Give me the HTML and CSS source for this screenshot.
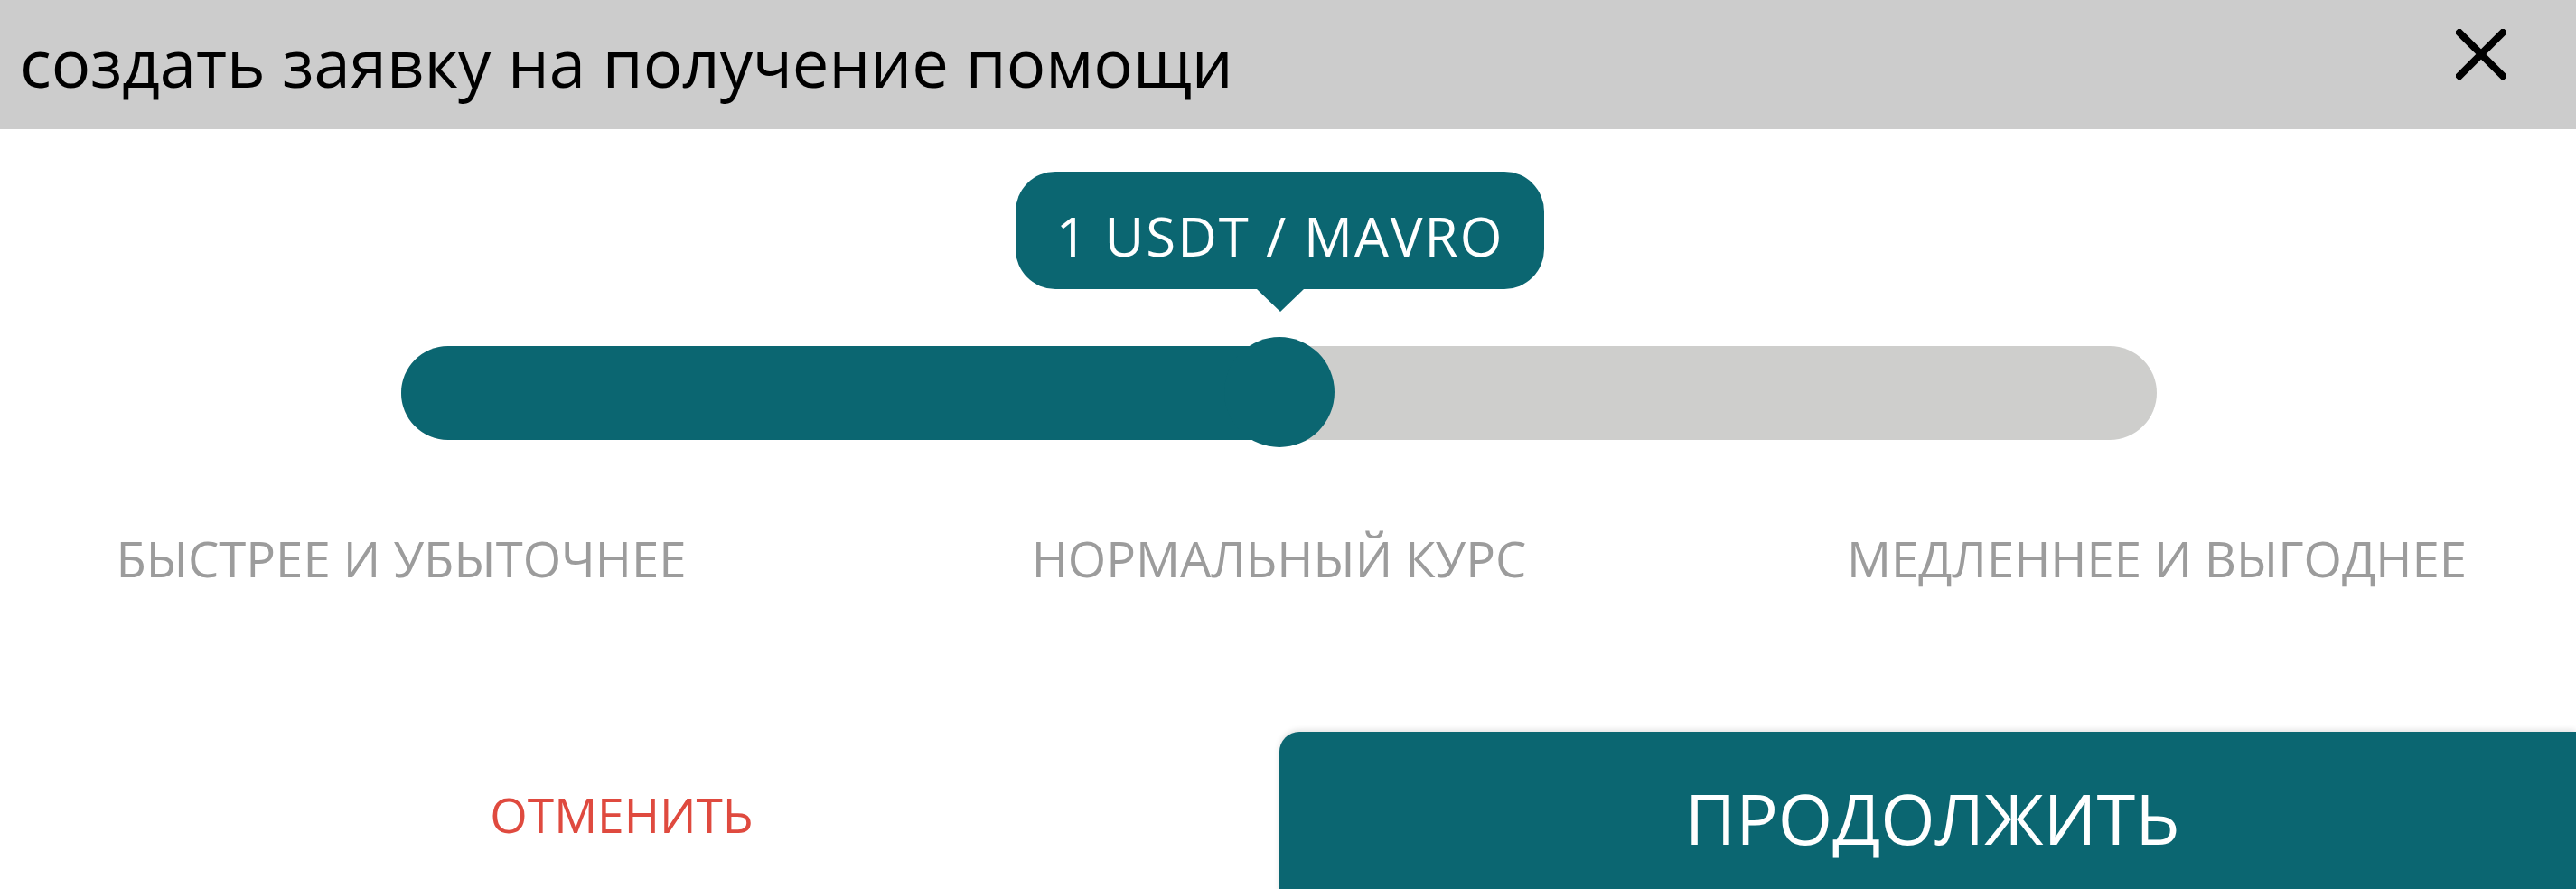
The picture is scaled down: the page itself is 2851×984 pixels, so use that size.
FILE: index.html
```html
<!DOCTYPE html>
<html lang="ru">
<head>
<meta charset="utf-8">
<title>создать заявку на получение помощи</title>
<link rel="stylesheet" href="styles.css">
</head>
<body>
<div class="dialog">
  <header class="header">
    <h1 class="title">создать заявку на получение помощи</h1>
    <button class="close" aria-label="Закрыть">
      <svg width="56" height="56" viewBox="0 0 56 56"><path d="M4 4 L52 52 M52 4 L4 52" stroke="#000" stroke-width="8" stroke-linecap="square" fill="none"/></svg>
    </button>
  </header>
  <main class="body">
    <div class="slider">
      <div class="fill" style="width: 972px"></div>
      <div class="thumb" style="left: 972px"></div>
      <div class="tooltip" style="left: 972px">1 USDT / MAVRO</div>
    </div>
    <div class="labels">
      <span class="label"><span>БЫСТРЕЕ И УБЫТОЧНЕЕ</span></span>
      <span class="label"><span>НОРМАЛЬНЫЙ КУРС</span></span>
      <span class="label"><span>МЕДЛЕННЕЕ И ВЫГОДНЕЕ</span></span>
    </div>
  </main>
  <footer class="footer">
    <div class="cancel-cell"><button class="cancel">ОТМЕНИТЬ</button></div>
    <button class="continue">ПРОДОЛЖИТЬ</button>
  </footer>
</div>
</body>
</html>
```
FILE: styles.css
```css
* { box-sizing: border-box; }
html, body {
  margin: 0;
  padding: 0;
  background: #ffffff;
  overflow: hidden;
}
body {
  width: 2851px;
  height: 984px;
  font-family: "Open Sans", "Noto Sans", sans-serif;
}
.dialog {
  width: 2851px;
  height: 984px;
  display: flex;
  flex-direction: column;
}
.header {
  height: 143px;
  background: #cccccc;
  display: flex;
  align-items: center;
  justify-content: space-between;
  padding: 0 77px 0 22px;
  flex-shrink: 0;
}
.title {
  margin: 0;
  font-weight: 400;
  font-size: 72.4px;
  line-height: 1;
  color: #000;
  position: relative;
  top: -2px;
}
.close {
  border: 0;
  background: none;
  padding: 0;
  width: 56px;
  height: 56px;
  display: block;
  position: relative;
  top: -12px;
}
.close svg { display: block; }
.body {
  padding-top: 240px;
}
.slider {
  position: relative;
  margin-left: 444px;
  width: 1943px;
  height: 104px;
  background: #cececc;
  border-radius: 52px;
}
.fill {
  height: 104px;
  background: #0b6671;
  border-radius: 52px 0 0 52px;
}
.thumb {
  position: absolute;
  top: -10px;
  width: 122px;
  height: 122px;
  margin-left: -61px;
  border-radius: 50%;
  background: #0b6671;
}
.tooltip {
  position: absolute;
  bottom: 167px;
  width: 585px;
  height: 130px;
  margin-left: -292px;
  background: #0b6671;
  color: #fff;
  border-radius: 44px;
  font-size: 60px;
  letter-spacing: 2px;
  display: flex;
  align-items: center;
  justify-content: center;
  padding-top: 12px;
  white-space: nowrap;
}
.tooltip::after {
  content: "";
  position: absolute;
  left: 50%;
  top: 100%;
  margin-left: -26px;
  border-left: 26px solid transparent;
  border-right: 26px solid transparent;
  border-top: 25px solid #0b6671;
}
.labels {
  margin-top: 96px;
  margin-left: 444px;
  width: 1943px;
  display: flex;
  justify-content: space-between;
  height: 70px;
}
.label {
  width: 0;
  display: flex;
  justify-content: center;
  white-space: nowrap;
  font-size: 54.5px;
  line-height: 70px;
  color: #9c9c9c;
}
.footer {
  margin-top: 157px;
  display: flex;
  align-items: flex-start;
}
.cancel-cell {
  width: 1416px;
  height: 192px;
  display: flex;
  align-items: center;
  justify-content: center;
  padding-right: 40px;
}
.cancel {
  border: 0;
  background: none;
  padding: 0;
  font-family: inherit;
  font-size: 53.3px;
  line-height: 70px;
  color: #df4a3f;
  position: relative;
  top: -4px;
}
.continue {
  flex: 1;
  height: 192px;
  border: 0;
  margin: 0;
  background: #0b6671;
  border-radius: 22px 0 0 0;
  color: #fff;
  font-family: inherit;
  font-size: 77.6px;
  line-height: 1;
  padding: 0 0 0 10px;
  box-shadow: 0 -2px 6px rgba(0,0,0,0.12);
}
```
